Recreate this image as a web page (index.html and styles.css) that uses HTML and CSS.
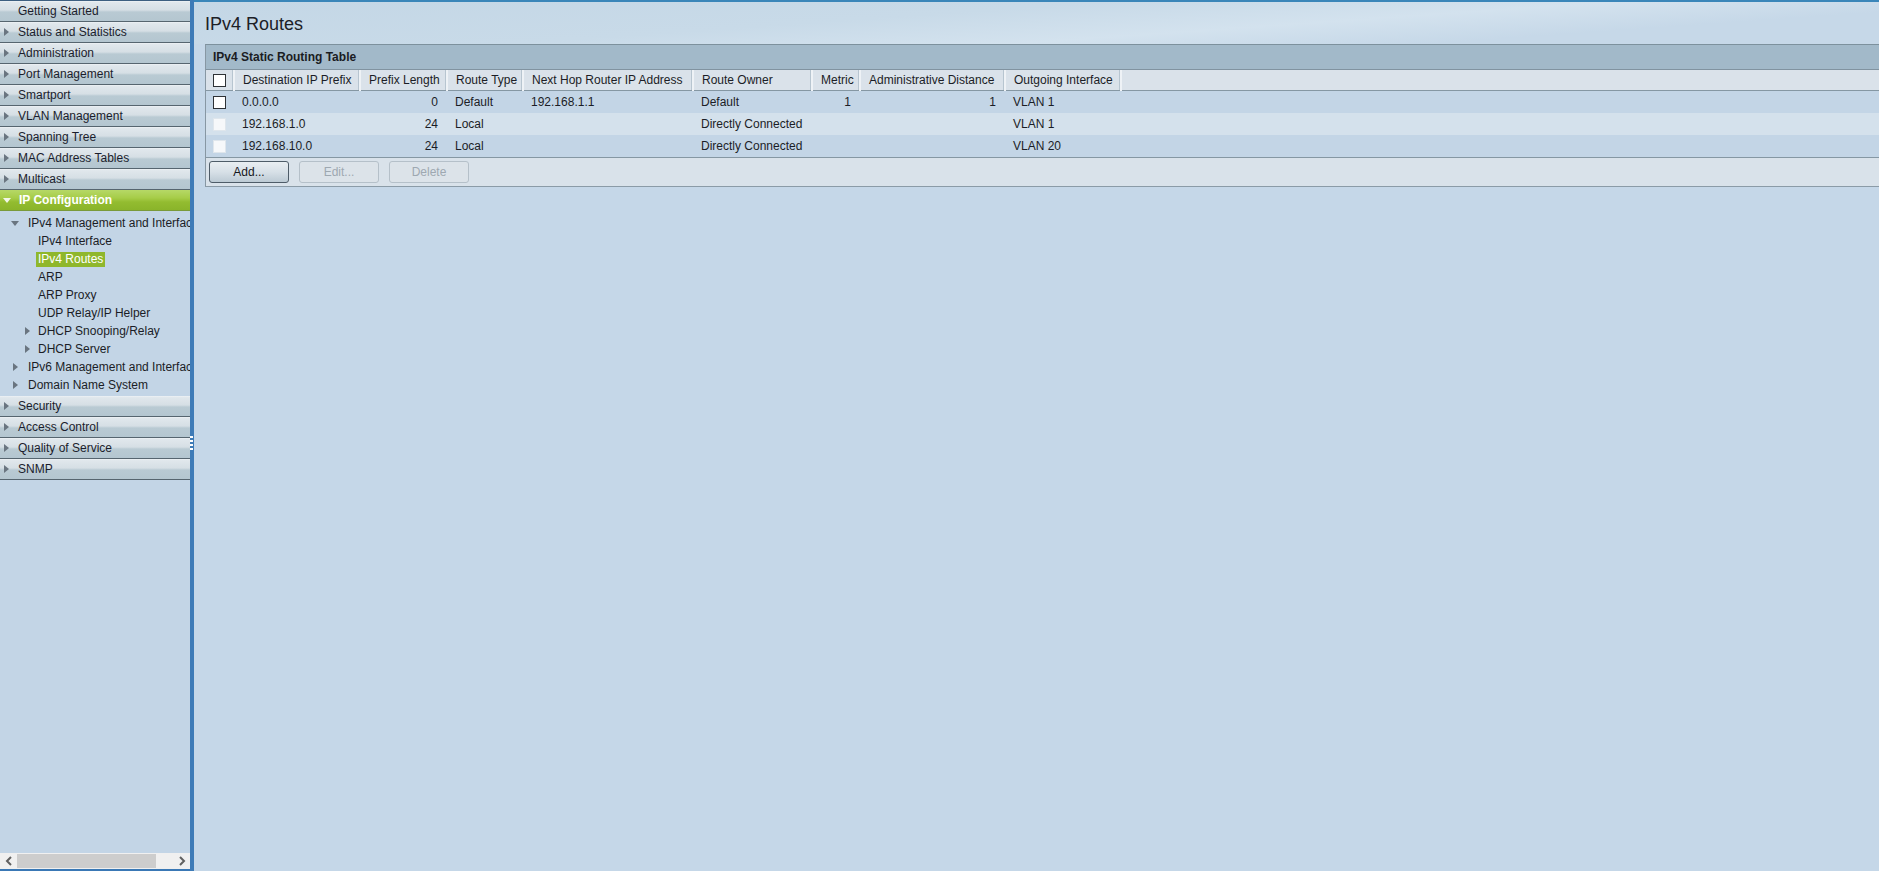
FILE: index.html
```html
<!DOCTYPE html>
<html>
<head>
<meta charset="utf-8">
<title>IPv4 Routes</title>
<link rel="stylesheet" href="styles.css">
</head>
<body>
<div class="page">
  <aside class="sidebar">
    <nav class="menu">
      <div class="item plain"><span class="tx">Getting Started</span></div>
      <div class="item"><span class="tri"></span><span class="tx">Status and Statistics</span></div>
      <div class="item"><span class="tri"></span><span class="tx">Administration</span></div>
      <div class="item"><span class="tri"></span><span class="tx">Port Management</span></div>
      <div class="item"><span class="tri"></span><span class="tx">Smartport</span></div>
      <div class="item"><span class="tri"></span><span class="tx">VLAN Management</span></div>
      <div class="item"><span class="tri"></span><span class="tx">Spanning Tree</span></div>
      <div class="item"><span class="tri"></span><span class="tx">MAC Address Tables</span></div>
      <div class="item"><span class="tri"></span><span class="tx">Multicast</span></div>
      <div class="item active"><span class="tri down"></span><span class="tx">IP Configuration</span></div>
      <div class="tree">
        <div class="node l1"><span class="ttri down"></span><span>IPv4 Management and Interfaces</span></div>
        <div class="node l2"><span>IPv4 Interface</span></div>
        <div class="node l2"><span class="sel">IPv4 Routes</span></div>
        <div class="node l2"><span>ARP</span></div>
        <div class="node l2"><span>ARP Proxy</span></div>
        <div class="node l2"><span>UDP Relay/IP Helper</span></div>
        <div class="node l2t"><span class="ttri"></span><span>DHCP Snooping/Relay</span></div>
        <div class="node l2t"><span class="ttri"></span><span>DHCP Server</span></div>
        <div class="node l1r"><span class="ttri"></span><span>IPv6 Management and Interfaces</span></div>
        <div class="node l1r"><span class="ttri"></span><span>Domain Name System</span></div>
      </div>
      <div class="item"><span class="tri"></span><span class="tx">Security</span></div>
      <div class="item"><span class="tri"></span><span class="tx">Access Control</span></div>
      <div class="item"><span class="tri"></span><span class="tx">Quality of Service</span></div>
      <div class="item"><span class="tri"></span><span class="tx">SNMP</span></div>
    </nav>
    <div class="hscroll">
      <span class="arrow"><svg width="8" height="10" viewBox="0 0 8 10"><path d="M6 1 L2 5 L6 9" fill="none" stroke="#606060" stroke-width="2"/></svg></span>
      <span class="track"><span class="thumb"></span></span>
      <span class="arrow"><svg width="8" height="10" viewBox="0 0 8 10"><path d="M2 1 L6 5 L2 9" fill="none" stroke="#606060" stroke-width="2"/></svg></span>
    </div>
  </aside>
  <div class="divider"><span class="grip"></span></div>
  <main class="content">
    <header class="head"><h1 class="title">IPv4 Routes</h1></header>
    <section class="panel">
      <div class="panel-title">IPv4 Static Routing Table</div>
      <table class="grid">
        <colgroup>
          <col class="c-cb"><col class="c-dest"><col class="c-plen"><col class="c-type"><col class="c-hop"><col class="c-own"><col class="c-met"><col class="c-ad"><col class="c-out"><col>
        </colgroup>
        <thead>
          <tr>
            <th class="cbcell"><span class="cb"></span></th>
            <th>Destination IP Prefix</th>
            <th>Prefix Length</th>
            <th>Route Type</th>
            <th>Next Hop Router IP Address</th>
            <th>Route Owner</th>
            <th>Metric</th>
            <th>Administrative Distance</th>
            <th>Outgoing Interface</th>
            <th class="fill"></th>
          </tr>
        </thead>
        <tbody>
          <tr class="odd">
            <td class="cbcell"><span class="cb"></span></td>
            <td>0.0.0.0</td><td class="num">0</td><td>Default</td><td>192.168.1.1</td><td>Default</td><td class="num">1</td><td class="num">1</td><td>VLAN 1</td><td></td>
          </tr>
          <tr class="even">
            <td class="cbcell"><span class="cb off"></span></td>
            <td>192.168.1.0</td><td class="num">24</td><td>Local</td><td></td><td>Directly Connected</td><td></td><td></td><td>VLAN 1</td><td></td>
          </tr>
          <tr class="odd">
            <td class="cbcell"><span class="cb off"></span></td>
            <td>192.168.10.0</td><td class="num">24</td><td>Local</td><td></td><td>Directly Connected</td><td></td><td></td><td>VLAN 20</td><td></td>
          </tr>
        </tbody>
      </table>
      <div class="actions">
        <button class="btn">Add...</button>
        <button class="btn disabled">Edit...</button>
        <button class="btn disabled">Delete</button>
      </div>
    </section>
  </main>
</div>
</body>
</html>
```
FILE: styles.css
```css
html, body {
  margin: 0;
  padding: 0;
  height: 100%;
}
body {
  font-family: "Liberation Sans", Arial, sans-serif;
  font-size: 12px;
  color: #1b1d26;
  background: #c5d7e8;
  overflow: hidden;
}
.page {
  display: flex;
  height: 100vh;
}

/* ---------- sidebar ---------- */
.sidebar {
  width: 190px;
  flex: none;
  display: flex;
  flex-direction: column;
  background: #c3d5e6;
  border-top: 1px solid #3d5f80;
  border-bottom: 2px solid #3a78b5;
  box-sizing: border-box;
}
.menu {
  flex: 1;
  overflow: hidden;
}
.item {
  display: flex;
  align-items: center;
  height: 20px;
  border-bottom: 1px solid #56656f;
  padding-left: 4px;
  background: linear-gradient(#eef2f5 0, #e0e7ec 8%, #d6dfe5 45%, #b9cad3 55%, #b4c6d0 100%);
  white-space: nowrap;
  color: #1b1d2c;
}
.item.plain .tx { margin-left: 14px; }
.tri {
  width: 0;
  height: 0;
  border-left: 5px solid #6a7580;
  border-top: 4px solid transparent;
  border-bottom: 4px solid transparent;
  margin-right: 9px;
}
.item.active {
  background: linear-gradient(#b6d867 0, #a6cc48 40%, #93bc30 60%, #8ab42a 100%);
  color: #fff;
  font-weight: bold;
  border-bottom-color: #7a9a3a;
}
.tri.down {
  border-top: 5px solid #f2f6e8;
  border-left: 4px solid transparent;
  border-right: 4px solid transparent;
  border-bottom: 0;
  margin-left: -1px;
  margin-right: 8px;
}

.tree {
  padding: 3px 0 2px;
  white-space: nowrap;
  overflow: hidden;
}
.node {
  display: flex;
  align-items: center;
  height: 18px;
}
.node.l1 { padding-left: 11px; }
.node.l1r { padding-left: 13px; }
.node.l2 { padding-left: 38px; }
.node.l2t { padding-left: 25px; }
.ttri {
  width: 0;
  height: 0;
  flex: none;
  border-left: 5px solid #6a7580;
  border-top: 4px solid transparent;
  border-bottom: 4px solid transparent;
  margin-right: 10px;
}
.node.l2t .ttri { margin-right: 8px; }
.ttri.down {
  border-top: 5px solid #6a7580;
  border-left: 4px solid transparent;
  border-right: 4px solid transparent;
  border-bottom: 0;
  margin-right: 9px;
}
.sel {
  display: inline-block;
  line-height: 15px;
  padding: 0 2px;
  margin-left: -2px;
  background: #8fb72c;
  color: #fff;
}

.hscroll {
  display: flex;
  align-items: center;
  height: 16px;
  background: #f0f0f0;
}
.arrow {
  width: 17px;
  display: flex;
  justify-content: center;
  align-items: center;
}
.track {
  flex: 1;
  height: 16px;
  display: flex;
  align-items: center;
}
.thumb {
  width: 139px;
  height: 14px;
  background: #cdcdcd;
}

.divider {
  width: 4px;
  flex: none;
  background: #3e7bb7;
  position: relative;
}
.grip {
  position: absolute;
  left: 0;
  top: 436px;
  width: 3px;
  height: 14px;
  background: repeating-linear-gradient(#ffffff 0 2px, #3e7bb7 2px 4px);
}

/* ---------- content ---------- */
.content {
  flex: 1;
  min-width: 0;
  border-top: 2px solid #3a86b9;
  background: #c5d7e8;
}
.head {
  height: 42px;
  box-sizing: border-box;
  padding: 11px 0 9px 11px;
  background: linear-gradient(176deg, #c4d7e6 0, #c8dae8 40%, #d3e2ee 62%, #c6d8e8 80%);
}
.title {
  margin: 0;
  font-size: 18px;
  line-height: 22px;
  font-weight: normal;
  color: #1c2026;
}
.panel {
  margin-left: 11px;
  border-left: 1px solid #8797a3;
  border-top: 1px solid #7d919d;
  border-bottom: 1px solid #8b9ba7;
}
.panel-title {
  height: 24px;
  line-height: 24px;
  padding-left: 7px;
  font-weight: bold;
  background: #a2b9c9;
  border-bottom: 1px solid #8193a0;
  color: #1a1c22;
}
.grid {
  width: 100%;
  border-collapse: collapse;
  table-layout: fixed;
}
.c-cb { width: 28px; }
.c-dest { width: 126px; }
.c-plen { width: 87px; }
.c-type { width: 76px; }
.c-hop { width: 170px; }
.c-own { width: 119px; }
.c-met { width: 48px; }
.c-ad { width: 145px; }
.c-out { width: 116px; }
.grid th {
  height: 20px;
  padding: 0 0 0 8px;
  text-align: left;
  font-weight: normal;
  white-space: nowrap;
  background: #dae2ea;
  border-right: 2px solid #eef2f6;
  border-bottom: 1px solid #8597a3;
  box-shadow: inset -1px 0 0 #b7c5d0;
}
.grid th.fill {
  border-right: 0;
  box-shadow: none;
}
.grid td {
  height: 22px;
  padding: 0 9px 0 8px;
  white-space: nowrap;
}
.grid tbody tr:last-child td {
  border-bottom: 1px solid #8597a3;
}
.grid tr.odd td { background: #c3d5e6; }
.grid tr.even td { background: #d4e1ec; }
.grid td.num { text-align: right; }
.grid .cbcell {
  padding: 0 0 0 7px;
}
.cb {
  display: block;
  width: 11px;
  height: 11px;
  background: #fff;
  border: 1px solid #2e3236;
}
.cb.off {
  border-color: #dfe6ec;
  background: #f6f8fa;
}
.actions {
  display: flex;
  gap: 10px;
  padding: 3px 3px 3px 3px;
  background: #d9e2ea;
}
.btn {
  width: 80px;
  height: 22px;
  border-radius: 3px;
  border: 1px solid #4e5c68;
  background: linear-gradient(#e9eef2 0, #d7e0e7 50%, #bccad4 100%);
  font-family: "Liberation Sans", Arial, sans-serif;
  font-size: 12px;
  color: #15171c;
  padding: 0;
}
.btn.disabled {
  border-color: #b5c0c9;
  background: #dce3e9;
  color: #9ea8b1;
}
```
